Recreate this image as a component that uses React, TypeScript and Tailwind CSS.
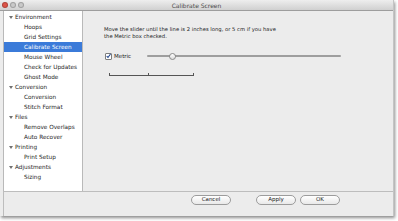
import React from 'react';

type NavItem = { label: string; group?: boolean; selected?: boolean };

const navItems: NavItem[] = [
  { label: 'Environment', group: true },
  { label: 'Hoops' },
  { label: 'Grid Settings' },
  { label: 'Calibrate Screen', selected: true },
  { label: 'Mouse Wheel' },
  { label: 'Check for Updates' },
  { label: 'Ghost Mode' },
  { label: 'Conversion', group: true },
  { label: 'Conversion' },
  { label: 'Stitch Format' },
  { label: 'Files', group: true },
  { label: 'Remove Overlaps' },
  { label: 'Auto Recover' },
  { label: 'Printing', group: true },
  { label: 'Print Setup' },
  { label: 'Adjustments', group: true },
  { label: 'Sizing' },
];

const font = { fontFamily: '"DejaVu Sans", "Lucida Grande", sans-serif' };

const TrafficLight = ({ color }: { color: string }) => (
  <span className={`block w-[6px] h-[6px] rounded-full border border-black/20 ${color}`} />
);

const PillButton = ({ label }: { label: string }) => (
  <button className="w-[40px] h-[10px] rounded-full border border-[#9c9c9c] bg-gradient-to-b from-white to-[#e9e9e9] text-[5.5px] leading-none text-[#222] flex items-center justify-center">
    {label}
  </button>
);

const App = () => {
  return (
    <div className="w-[398px] h-[221px] bg-white overflow-hidden" style={font}>
      <div className="w-[394px] h-[216px] flex flex-col bg-[#ececec] border-r border-[#c4c4c4] shadow-[1px_2px_3px_rgba(0,0,0,0.45)]">
        {/* title bar */}
        <div className="h-[11px] flex items-center relative bg-gradient-to-b from-[#eeeeee] to-[#d0d0d0] border-b border-[#9d9d9d]">
          <div className="flex gap-[2px] pl-[2px]">
            <TrafficLight color="bg-[#dd5347]" />
            <TrafficLight color="bg-[#c9c9c9]" />
            <TrafficLight color="bg-[#c9c9c9]" />
          </div>
          <div className="absolute inset-0 flex items-center justify-center text-[6px] text-[#4a4a4a]">
            Calibrate Screen
          </div>
        </div>

        {/* body */}
        <div className="flex h-[180px]">
          <div className="ml-[3px] w-[80px] bg-white border-l border-r border-[#b9b9b9] pt-[1px] text-[5.75px] text-[#1e1e1e]">
            {navItems.map((item, i) => (
              <div
                key={i}
                className={`h-[10px] flex items-center whitespace-nowrap ${
                  item.selected ? 'bg-[#3b7bd9] text-white' : ''
                } ${item.group ? 'pl-[5px]' : 'pl-[20px]'}`}
              >
                {item.group && (
                  <svg width="4" height="3" viewBox="0 0 4 3" className="mr-[2px]">
                    <path d="M0 0 H4 L2 3 Z" fill="#707070" />
                  </svg>
                )}
                {item.label}
              </div>
            ))}
          </div>

          <div className="flex-1 pl-[21px] pt-[15px] text-[5.25px] text-[#222]">
            <p className="leading-[7px] whitespace-nowrap">
              Move the slider until the line is 2 inches long, or 5 cm if you have
              <br />
              the Metric box checked.
            </p>

            <div className="flex items-center mt-[12px] h-[8px]">
              <span className="w-[7px] h-[7px] ml-[1px] rounded-[1px] border border-[#7d7d7d] bg-white flex items-center justify-center">
                <svg width="6" height="6" viewBox="0 0 6 6">
                  <path d="M0.8 3.2 L2.4 4.8 L5.4 0.6" fill="none" stroke="#20448c" strokeWidth="1.3" />
                </svg>
              </span>
              <span className="ml-[2px] text-[5.5px]">Metric</span>

              <div className="ml-[16px] w-[194px] h-[8px] relative flex items-center">
                <div className="w-full h-[2px] rounded-full bg-[#9e9e9e]" />
                <div className="absolute left-[22px] top-[1px] w-[7px] h-[7px] rounded-full border border-[#8a8a8a] bg-gradient-to-b from-white to-[#dcdcdc]" />
              </div>
            </div>

            <div className="mt-[13px] ml-[5px] w-[85px] h-[3px] relative">
              <div className="absolute left-0 right-0 bottom-0 h-[1px] bg-[#555]" />
              <div className="absolute left-0 bottom-0 w-[1px] h-[3px] bg-[#555]" />
              <div className="absolute left-[39px] bottom-0 w-[1px] h-[3px] bg-[#555]" />
              <div className="absolute right-0 bottom-0 w-[1px] h-[3px] bg-[#555]" />
            </div>
          </div>
        </div>

        {/* footer */}
        <div className="flex-1 ml-[3px] border-t border-l border-[#bdbdbd] flex items-start pt-[3px]">
          <div className="ml-[187px]">
            <PillButton label="Cancel" />
          </div>
          <div className="ml-[25px] flex gap-[4px]">
            <PillButton label="Apply" />
            <PillButton label="OK" />
          </div>
        </div>
      </div>
    </div>
  );
};

export default App;
